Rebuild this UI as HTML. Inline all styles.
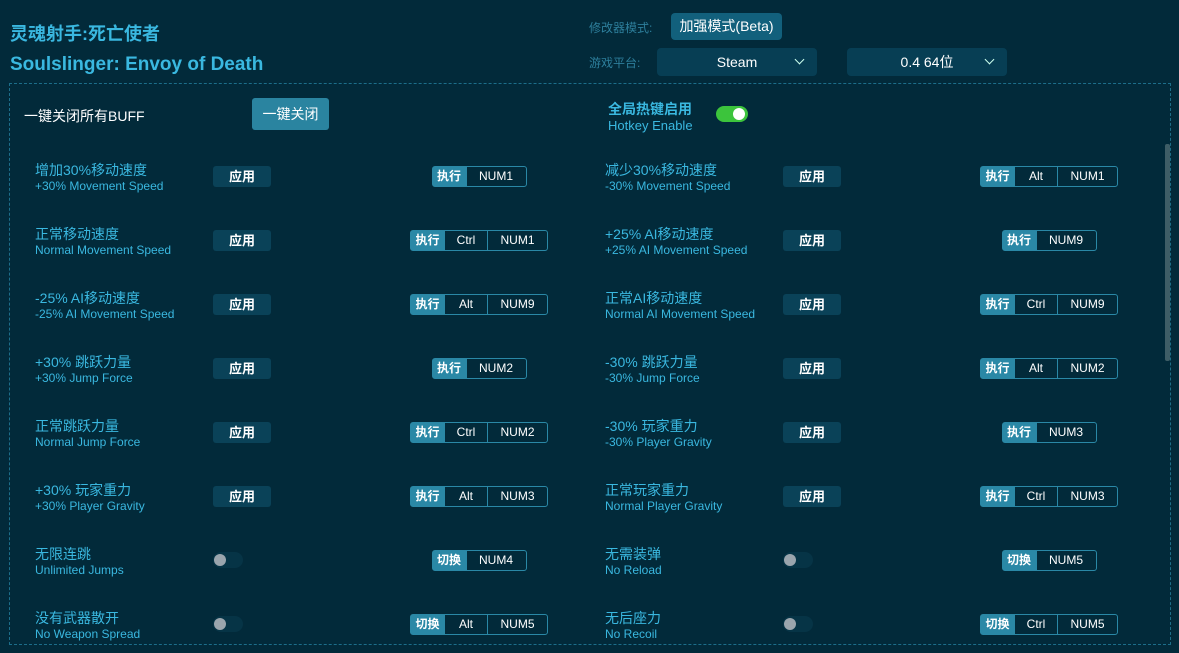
<!DOCTYPE html>
<html><head><meta charset="utf-8">
<style>
*{margin:0;padding:0;box-sizing:border-box}
body{width:1179px;height:653px;background:#022a3a;overflow:hidden;position:relative;font-family:"Liberation Sans","Noto Sans CJK SC",sans-serif;color:#fff}
.a{position:absolute}
.t1{left:10px;top:20px;font-size:18px;font-weight:bold;color:#3ab8e0}
.t2{left:10px;top:54px;font-size:19px;font-weight:bold;color:#3ab8e0}
.lbl{font-size:12px;color:#2d7f9c}
.sel{background:#073e54;border-radius:4px;height:28px;font-size:14px;text-align:center;line-height:28px;color:#fff}
.sel i{position:absolute;right:14px;top:8px;width:7px;height:7px;border-right:1.5px solid #cfe;border-bottom:1.5px solid #cfe;transform:rotate(45deg)}
.box{left:9px;top:83px;width:1162px;height:562px;border:1px dashed #1c6e8a}
.cn{font-size:14px;color:#3ab8e0}
.en{font-size:12px;color:#3ab8e0}
.ap{width:58px;height:21px;background:#0a4258;border-radius:3px;font-size:13px;font-weight:bold;text-align:center;line-height:21px;color:#fff}
.hk{height:21px;border:1px solid #2a88a6;border-radius:3px;display:flex;font-size:12px;line-height:19px;color:#fff}
.hk span{text-align:center;border-left:1px solid #2a88a6}
.hk span:first-child{background:#2a88a6;border-left:none;width:33px;font-weight:bold}
.hk .m{width:43px}.hk .n{width:60px}
.tg{width:30px;height:16px;border-radius:8px;background:#063446}
.tg:after{content:"";position:absolute;left:1px;top:2px;width:12px;height:12px;border-radius:6px;background:#9aa5ad}
</style></head><body>
<div class="a t1">灵魂射手:死亡使者</div>
<div class="a t2">Soulslinger: Envoy of Death</div>
<div class="a lbl" style="left:589px;top:19px">修改器模式:</div>
<div class="a" style="left:671px;top:13px;width:111px;height:27px;background:#12607c;border-radius:4px;font-size:14px;line-height:27px;text-align:center">加强模式(Beta)</div>
<div class="a lbl" style="left:589px;top:54px">游戏平台:</div>
<div class="a sel" style="left:657px;top:48px;width:160px">Steam<i></i></div>
<div class="a sel" style="left:847px;top:48px;width:160px">0.4 64位<i></i></div>
<div class="a box"></div>
<div class="a" style="left:1165px;top:144px;width:5px;height:217px;background:#3e5d66;border-radius:2px"></div>
<div class="a" style="left:24px;top:106px;font-size:14px">一键关闭所有BUFF</div>
<div class="a" style="left:252px;top:98px;width:77px;height:32px;background:#2a84a0;border-radius:3px;font-size:14px;line-height:32px;text-align:center">一键关闭</div>
<div class="a" style="left:608px;top:99px;font-size:14px;font-weight:bold;color:#3ab8e0">全局热键启用</div>
<div class="a en" style="left:608px;top:118px;font-size:13px">Hotkey Enable</div>
<div class="a" style="left:716px;top:106px;width:32px;height:16px;border-radius:8px;background:#3cc43c"><div class="a" style="left:17px;top:2px;width:12px;height:12px;border-radius:6px;background:#fff"></div></div>

<div id="rows"></div>
<script>
const L=[["增加30%移动速度","+30% Movement Speed","执行","","NUM1"],["正常移动速度","Normal Movement Speed","执行","Ctrl","NUM1"],["-25% AI移动速度","-25% AI Movement Speed","执行","Alt","NUM9"],["+30% 跳跃力量","+30% Jump Force","执行","","NUM2"],["正常跳跃力量","Normal Jump Force","执行","Ctrl","NUM2"],["+30% 玩家重力","+30% Player Gravity","执行","Alt","NUM3"],["无限连跳","Unlimited Jumps","切换","","NUM4"],["没有武器散开","No Weapon Spread","切换","Alt","NUM5"]];
const R=[["减少30%移动速度","-30% Movement Speed","执行","Alt","NUM1"],["+25% AI移动速度","+25% AI Movement Speed","执行","","NUM9"],["正常AI移动速度","Normal AI Movement Speed","执行","Ctrl","NUM9"],["-30% 跳跃力量","-30% Jump Force","执行","Alt","NUM2"],["-30% 玩家重力","-30% Player Gravity","执行","","NUM3"],["正常玩家重力","Normal Player Gravity","执行","Ctrl","NUM3"],["无需装弹","No Reload","切换","","NUM5"],["无后座力","No Recoil","切换","Ctrl","NUM5"]];
let h="";
function col(arr,x,ax,cx){arr.forEach((r,i)=>{const y=160+i*64;
h+=`<div class="a cn" style="left:${x}px;top:${y}px">${r[0]}</div><div class="a en" style="left:${x}px;top:${y+19}px">${r[1]}</div>`;
if(r[2]=="切换")h+=`<div class="a tg" style="left:${ax}px;top:${y+8}px"></div>`;
else h+=`<div class="a ap" style="left:${ax}px;top:${y+6}px">应用</div>`;
const w=33+(r[3]?43:0)+60+2;
h+=`<div class="a hk" style="left:${cx-w/2}px;top:${y+6}px;width:${w}px"><span>${r[2]}</span>${r[3]?`<span class="m">${r[3]}</span>`:""}<span class="n">${r[4]}</span></div>`;});}
col(L,35,213,479);col(R,605,783,1049);
document.getElementById("rows").innerHTML=h;
</script>
</body></html>
